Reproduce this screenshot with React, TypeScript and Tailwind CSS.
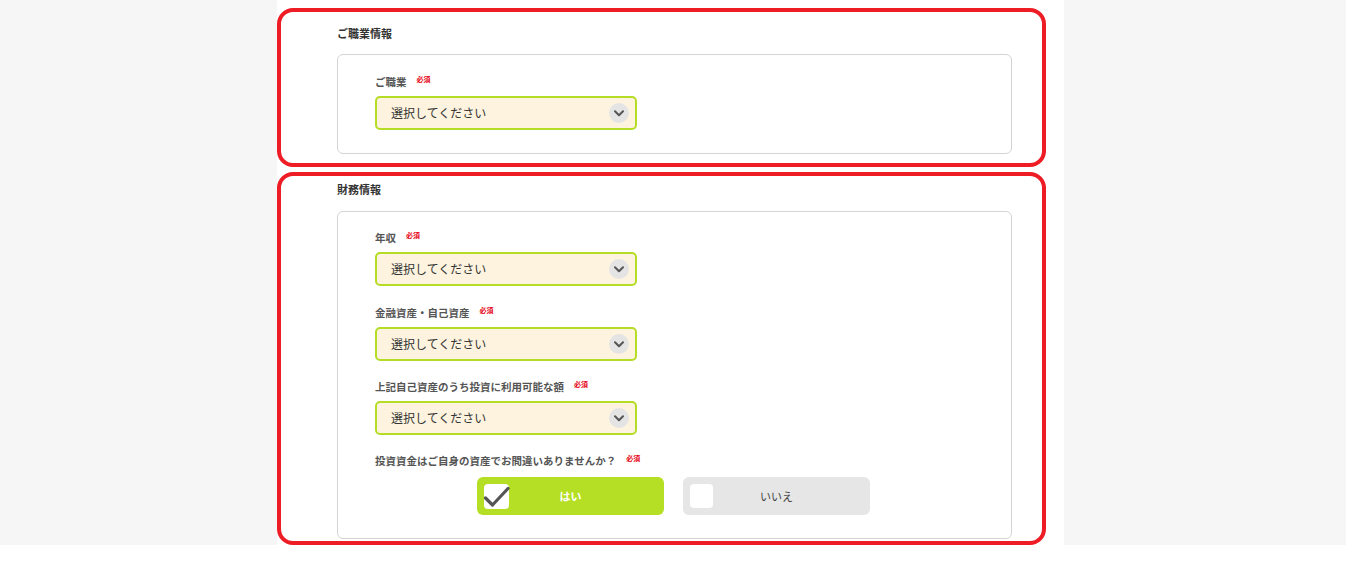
const font = { fontFamily: '"Noto Sans CJK JP", "Noto Sans", sans-serif' };

function Required() {
  return <span className="ml-[10px] -translate-y-[3px] text-[7px] font-bold leading-none text-[#e60012]">必須</span>;
}

function Label({ text }: { text: string }) {
  return (
    <div className="flex h-[14px] items-center text-[10.5px] font-bold leading-[14px] text-[#555]">
      <span>{text}</span>
      <Required />
    </div>
  );
}

function Select() {
  return (
    <div className="flex h-[34px] w-[262px] items-center justify-between rounded-[5px] border-2 border-[#b6dd26] bg-[#fdf3df] pl-[14px] pr-[6px]">
      <span className="text-[12px] text-[#333]">選択してください</span>
      <span className="flex h-[20px] w-[20px] items-center justify-center rounded-full bg-[#e4e4e4]">
        <svg width="10" height="7" viewBox="0 0 10 7" fill="none">
          <path d="M1 1.2 5 5.2 9 1.2" stroke="#555" strokeWidth="2" strokeLinecap="round" strokeLinejoin="round" />
        </svg>
      </span>
    </div>
  );
}

function Field({ label, className = "" }: { label: string; className?: string }) {
  return (
    <div className={`flex flex-col gap-[7px] ${className}`}>
      <Label text={label} />
      <Select />
    </div>
  );
}

export default function App() {
  return (
    <div className="min-h-screen bg-white" style={font}>
      <div className="flex h-[545px] bg-[#f6f6f6]">
        <div className="ml-[277px] flex h-full w-[787px] flex-col bg-white pt-[8px]">
          {/* 職業 */}
          <section className="h-[159px] w-[769px] rounded-[16px] border-4 border-[#ee1c25] pl-[56px] pt-[13px]">
            <h2 className="text-[11px] font-bold leading-[16px] text-[#333]">ご職業情報</h2>
            <div className="mt-[13px] h-[100px] w-[675px] rounded-[6px] border border-[#d4d4d4] pl-[37px] pt-[20px]">
              <Field label="ご職業" />
            </div>
          </section>

          {/* 財務 */}
          <section className="mt-[5px] flex-1 w-[769px] rounded-[16px] border-4 border-[#ee1c25] pl-[56px] pt-[5px]">
            <h2 className="text-[11px] font-bold leading-[16px] text-[#333]">財務情報</h2>
            <div className="mt-[14px] h-[328px] w-[675px] rounded-[6px] border border-[#d4d4d4] pl-[37px] pt-[19px]">
              <Field label="年収" />
              <Field label="金融資産・自己資産" className="mt-[20px]" />
              <Field label="上記自己資産のうち投資に利用可能な額" className="mt-[19px]" />
              <div className="mt-[19px] flex flex-col gap-[9px]">
                <Label text="投資資金はご自身の資産でお間違いありませんか？" />
                <div className="ml-[102px] flex gap-[19px]">
                  <button className="relative flex h-[38px] w-[187px] items-center rounded-[6px] bg-[#b4df24] px-[7px]">
                    <span className="h-[25px] w-[25px] rounded-[4px] bg-white" />
                    <svg className="absolute left-[7px] top-[6px]" width="26" height="26" viewBox="0 0 26 26" fill="none">
                      <path d="M1.5 15 8.5 22 24 5.5" stroke="#555" strokeWidth="3.2" strokeLinecap="round" strokeLinejoin="round" />
                    </svg>
                    <span className="flex-1 pr-[25px] text-center text-[11px] font-bold text-white">はい</span>
                  </button>
                  <button className="flex h-[38px] w-[187px] items-center rounded-[6px] bg-[#e6e6e6] px-[7px]">
                    <span className="h-[24px] w-[23px] rounded-[4px] bg-white" />
                    <span className="flex-1 pr-[23px] text-center text-[11px] text-[#444]">いいえ</span>
                  </button>
                </div>
              </div>
            </div>
          </section>
        </div>
      </div>
    </div>
  );
}
